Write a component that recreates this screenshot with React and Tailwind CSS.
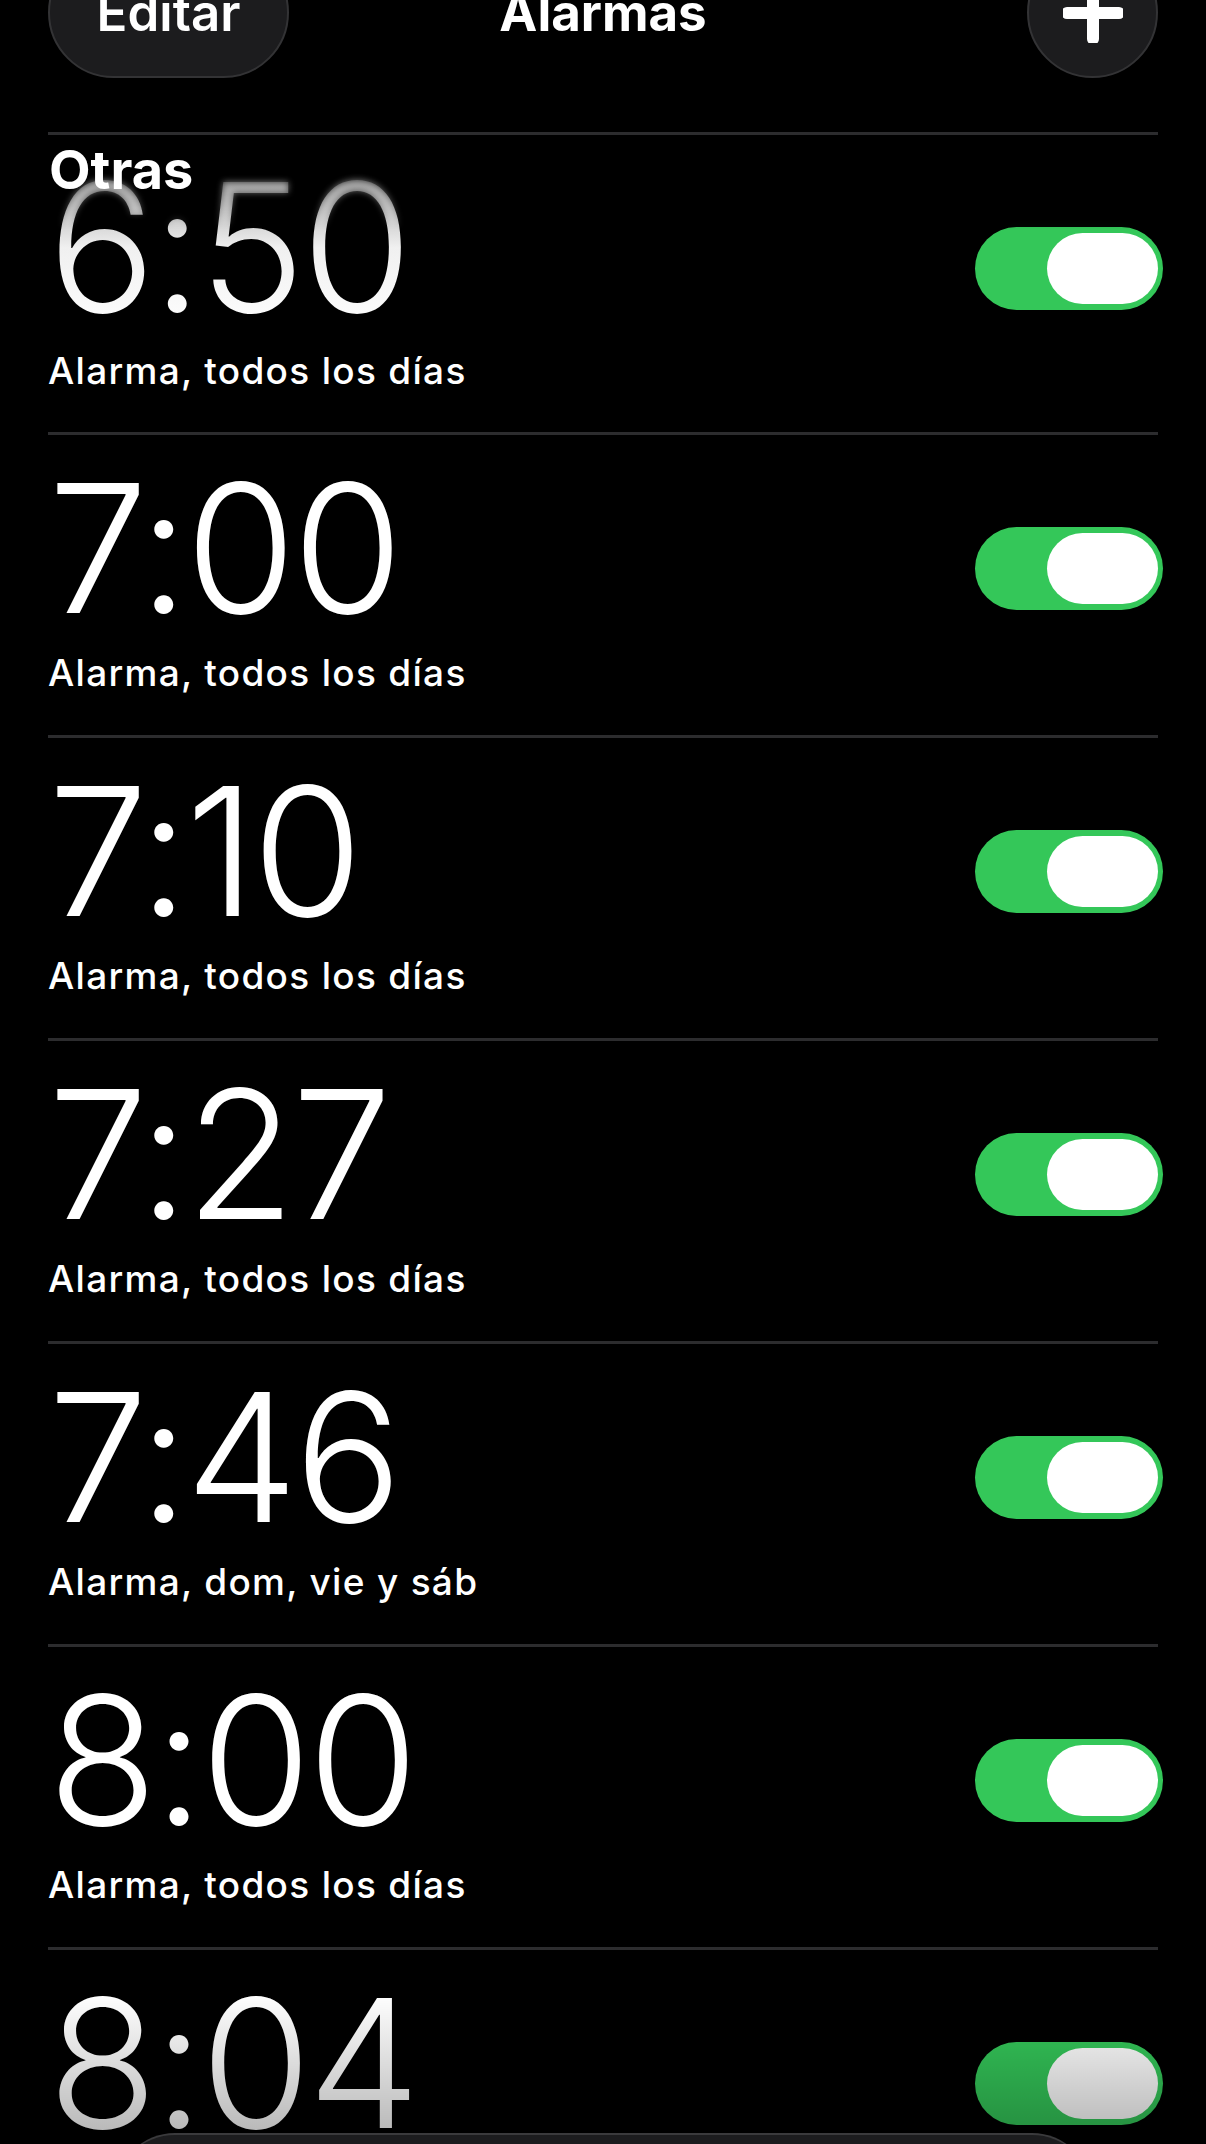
import React from "react";

const alarms = [
  { time: "6:50", label: "Alarma, todos los días" },
  { time: "7:00", label: "Alarma, todos los días" },
  { time: "7:10", label: "Alarma, todos los días" },
  { time: "7:27", label: "Alarma, todos los días" },
  { time: "7:46", label: "Alarma, dom, vie y sáb" },
  { time: "8:00", label: "Alarma, todos los días" },
  { time: "8:04", label: "Alarma, todos los días" },
];

function Toggle() {
  return (
    <div className="-mr-[5px] mt-[92px] flex h-[83px] w-[188px] shrink-0 items-center justify-end rounded-full bg-[#34c759] pr-[5px]">
      <div className="h-[71px] w-[111px] rounded-full bg-white" />
    </div>
  );
}

function Row({ time, label, first }) {
  return (
    <div>
      <div className="h-[3px] bg-[#2c2c2e]" />
      <div
        className={
          "flex items-start justify-between " +
          (first ? "h-[296.5px]" : "h-[300px]")
        }
      >
        <div className={first ? "pt-[22.5px]" : "pt-[24.5px]"}>
          <div
            className={
              "text-[179px] font-light leading-none tracking-[-0.02em] " +
              (first
                ? "bg-gradient-to-b from-[#8a8a8a] via-[#f0f0f0] to-white bg-clip-text text-transparent"
                : "text-white")
            }
          >
            {time}
          </div>
          <div className="mt-[15.5px] text-[37px] font-medium leading-none tracking-[0.035em] text-white">
            {label}
          </div>
        </div>
        <Toggle />
      </div>
    </div>
  );
}

export default function App() {
  return (
    <div className="relative h-[2144px] w-[1206px] overflow-hidden bg-black text-white font-['Inter','Noto_Sans',sans-serif]">
      <div className="-mt-[53px] grid h-[131px] grid-cols-[1fr_auto_1fr] items-center px-[48px]">
        <div className="flex h-[131px] w-[241px] items-center justify-center justify-self-start rounded-full border-2 border-[#333335] bg-[#1c1c1e] text-[51px] font-semibold leading-none">
          Editar
        </div>
        <div className="text-[51px] font-bold leading-none">Alarmas</div>
        <div className="flex h-[131px] w-[131px] items-center justify-center justify-self-end rounded-full border-2 border-[#333335] bg-[#1c1c1e]">
          <svg width="60" height="60" viewBox="0 0 60 60">
            <path
              d="M30 4 V56 M4 30 H56"
              stroke="white"
              strokeWidth="12"
              strokeLinecap="round"
              fill="none"
            />
          </svg>
        </div>
      </div>

      <div className="mt-[54px] px-[48px]">
        {alarms.map((a, i) => (
          <Row key={a.time} time={a.time} label={a.label} first={i === 0} />
        ))}
      </div>

      <div className="pointer-events-none absolute left-0 right-0 top-[135px] h-[95px] backdrop-blur-[3px] [mask-image:linear-gradient(to_bottom,black_30%,transparent)]" />

      <div className="absolute left-[49px] top-[143px] text-[54px] font-bold leading-none text-white">
        Otras
      </div>

      <div className="pointer-events-none absolute bottom-0 left-0 right-0 h-[150px] bg-gradient-to-b from-transparent to-black/30" />

      <div className="absolute left-[115px] top-[2133px] h-[120px] w-[977px] rounded-t-[60px] border-t-2 border-[#3a3a3c] bg-[#1c1c1e]" />
    </div>
  );
}
